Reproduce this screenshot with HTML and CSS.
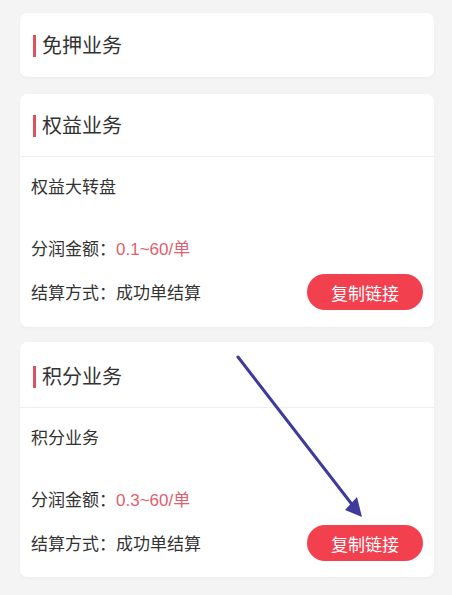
FILE: index.html
```html
<!DOCTYPE html>
<html lang="zh-CN">
<head>
  <meta charset="UTF-8">
  <title>业务推广</title>
  <link rel="stylesheet" href="styles.css">
</head>
<body>
  <div class="page">
    <div class="card first">
      <div class="card-head">
        <span class="card-title">免押业务</span>
      </div>
    </div>

    <div class="card">
      <div class="card-head bordered">
        <span class="card-title">权益业务</span>
      </div>
      <div class="card-body">
        <div class="item-name">权益大转盘</div>
        <div class="item-row">分润金额：<span class="amount">0.1~60/单</span></div>
        <div class="settle">
          <span>结算方式：成功单结算</span>
          <button class="copy-btn">复制链接</button>
        </div>
      </div>
    </div>

    <div class="card last">
      <div class="card-head bordered">
        <span class="card-title">积分业务</span>
      </div>
      <div class="card-body">
        <div class="item-name">积分业务</div>
        <div class="item-row">分润金额：<span class="amount">0.3~60/单</span></div>
        <div class="settle">
          <span>结算方式：成功单结算</span>
          <button class="copy-btn">复制链接</button>
        </div>
      </div>
    </div>

    <!-- pointer arrow drawn over the last card -->
    <svg class="pointer" width="452" height="595" viewBox="0 0 452 595">
      <line x1="238" y1="357" x2="354" y2="507" stroke="#3f3a9c" stroke-width="3" stroke-linecap="round"/>
      <polygon points="362,517 345,510 357,497" fill="#3f3a9c"/>
    </svg>
  </div>
</body>
</html>
```

FILE: styles.css
```css
body {
  margin: 0;
  background: #f4f4f4;
  font-family: "Liberation Sans", "Noto Sans CJK SC", sans-serif;
  color: #333;
}

.page {
  position: relative;
  padding: 13px 18px 16px 20px;
  display: flex;
  flex-direction: column;
  gap: 15px;
}

.card {
  background: #fff;
  border-radius: 7px;
  box-shadow: 0 1px 3px rgba(0, 0, 0, 0.04);
}

.card.first {
  margin-bottom: 2px;
}

.card-head {
  height: 64px;
  box-sizing: border-box;
  padding: 1px 13px 0;
  display: flex;
  align-items: center;
}

.card-head.bordered {
  height: 63px;
  border-bottom: 1px solid #eeeeee;
}

.card.last .card-head.bordered {
  height: 66px;
  padding-top: 5px;
}

.card-title {
  font-size: 20px;
  line-height: 22px;
  padding-left: 6px;
  border-left: 3px solid #d9525d;
}

.card-body {
  padding: 17px 11px 17px;
  font-size: 17px;
}

.card.last .card-body {
  padding-bottom: 16px;
}

.item-name {
  line-height: 24px;
  padding-top: 2px;
  margin-bottom: 36px;
}

.item-row {
  line-height: 24px;
  padding-top: 2px;
}

.amount {
  color: #e0606e;
}

.settle {
  height: 36px;
  display: flex;
  justify-content: space-between;
  align-items: center;
  margin-top: 12px;
}

.settle span {
  line-height: 24px;
  padding-top: 4px;
}

.copy-btn {
  width: 116px;
  height: 36px;
  border: none;
  border-radius: 18px;
  background: #f2404f;
  color: #fff;
  font-family: inherit;
  font-size: 17px;
  cursor: pointer;
}

.pointer {
  position: absolute;
  left: 0;
  top: 0;
  pointer-events: none;
}
```
